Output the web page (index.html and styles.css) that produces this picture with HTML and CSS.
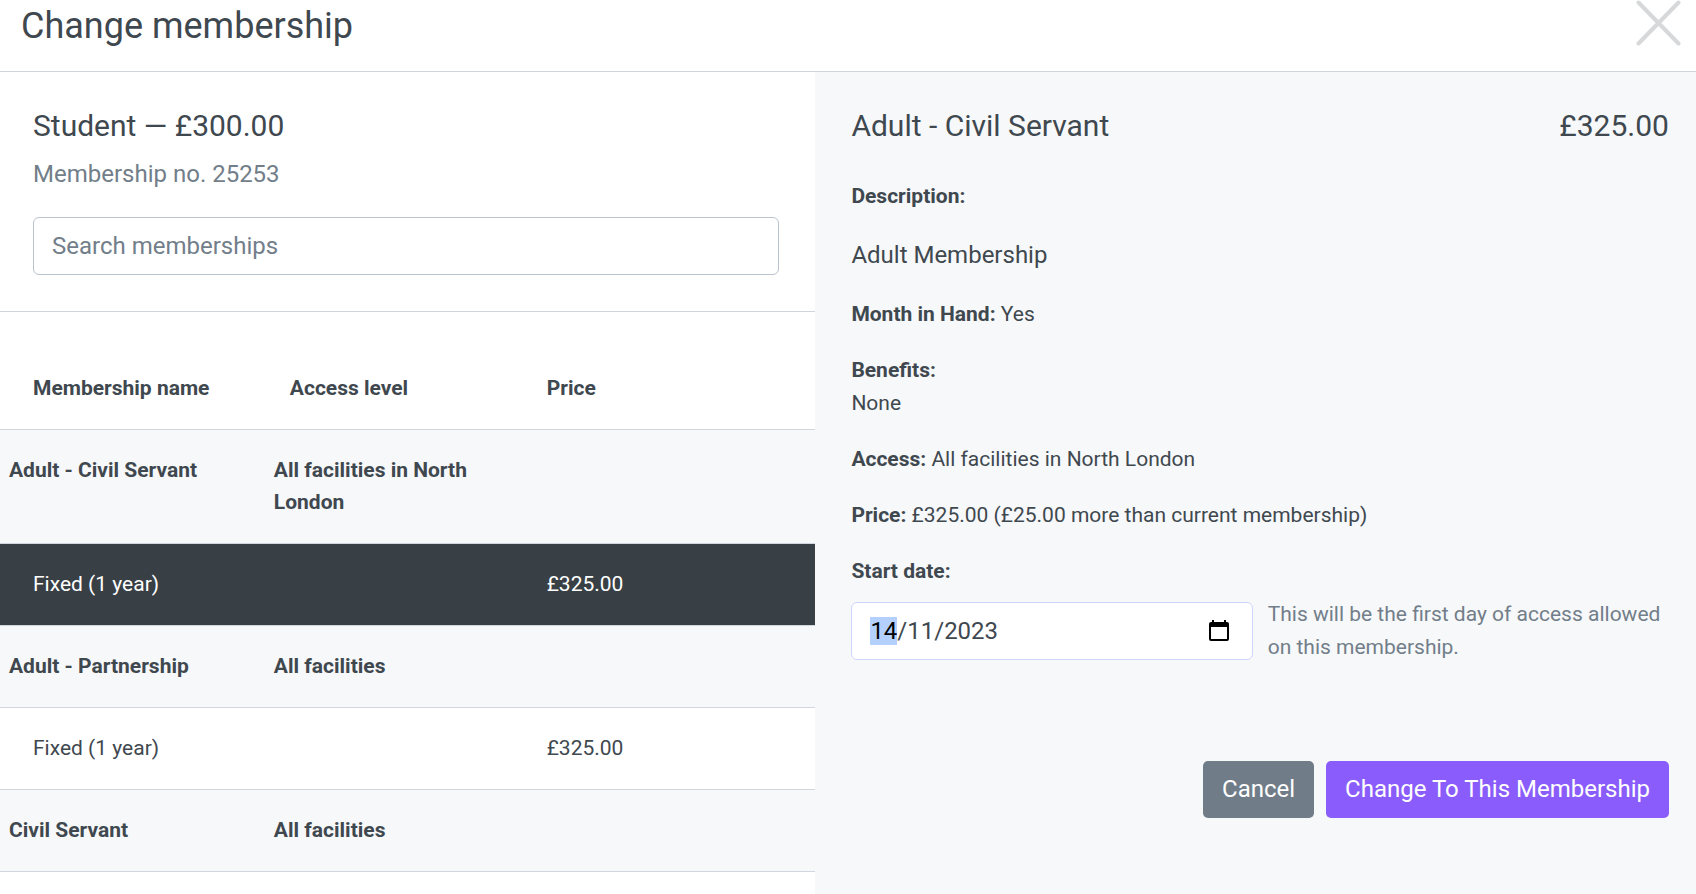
FILE: index.html
```html
<!doctype html>
<html lang="en">

<head>
<meta charset="utf-8">
<meta name="viewport" content="width=device-width, initial-scale=1">
<title>Change membership</title>
<link rel="stylesheet" href="styles.css">
</head>
<body>

<header class="header">
  <h1>Change membership</h1>
  <button type="button" class="close" aria-label="Close">
    <svg width="45" height="46" viewBox="0 0 45 46"><path d="M2.500 2.500 42.500 43.500M42.500 2.500 2.500 43.500"/></svg>
  </button>
</header>

<main class="columns">

  <!-- Current membership and the list to pick from -->
  <section class="list">
    <div class="current">
      <h2>Student — £300.00</h2>
      <p class="number">Membership no. 25253</p>
      <input type="text" class="field" placeholder="Search memberships" aria-label="Search memberships">
    </div>
    <table class="memberships">
      <thead>
        <tr>
          <th>Membership name</th>
          <th>Access level</th>
          <th>Price</th>
        </tr>
      </thead>
      <tbody>
        <tr class="group">
          <th>Adult - Civil Servant</th>
          <th>All facilities in North London</th>
          <th></th>
        </tr>
        <tr class="selected">
          <td>Fixed (1 year)</td>
          <td></td>
          <td>£325.00</td>
        </tr>
        <tr class="group">
          <th>Adult - Partnership</th>
          <th>All facilities</th>
          <th></th>
        </tr>
        <tr>
          <td>Fixed (1 year)</td>
          <td></td>
          <td>£325.00</td>
        </tr>
        <tr class="group">
          <th>Civil Servant</th>
          <th>All facilities</th>
          <th></th>
        </tr>
      </tbody>
    </table>
  </section>

  <!-- Details of the selected membership -->
  <section class="detail">
    <div class="detail-title">
      <h2>Adult - Civil Servant</h2>
      <h2>£325.00</h2>
    </div>
    <p><strong>Description:</strong></p>
    <p class="description">Adult Membership</p>
    <p><strong>Month in Hand:</strong> Yes</p>
    <p><strong>Benefits:</strong><br>None</p>
    <p><strong>Access:</strong> All facilities in North London</p>
    <p><strong>Price:</strong> £325.00 (£25.00 more than current membership)</p>
    <label for="start">Start date:</label>
    <div class="start">
      <div class="date">
        <input type="text" id="start" class="field" value="14/11/2023" autocomplete="off">
        <button type="button" class="picker" aria-label="Open calendar">
          <svg width="20" height="21" viewBox="0 0 20 21"><path fill-rule="evenodd" d="M3 0h2v2h10V0h2v2h1a2 2 0 0 1 2 2v15a2 2 0 0 1-2 2H2a2 2 0 0 1-2-2V4a2 2 0 0 1 2-2h1zM2 7v12h16V7z"/></svg>
        </button>
      </div>
      <p class="hint">This will be the first day of access allowed on this membership.</p>
    </div>
    <div class="buttons">
      <button type="button" class="btn">Cancel</button>
      <button type="button" class="btn primary">Change To This Membership</button>
    </div>
  </section>

</main>

<script>
// start with the day selected, ready to type over
var start = document.getElementById('start');
start.focus();
start.setSelectionRange(0, 2);
</script>

</body>

</html>
```
FILE: styles.css
```css
* {
  box-sizing: border-box;
}
body {
  margin: 0;
  min-height: 100vh;
  display: flex;
  flex-direction: column;
  font-family: Roboto, "Liberation Sans", sans-serif;
  font-size: 21px;
  line-height: 32px;
  color: #40484f;
  background-color: #fff;
}
h1, h2, p {
  margin: 0;
  font-weight: 400;
}
h1 {
  font-size: 36px;
  line-height: 43px;
}
h2 {
  font-size: 30px;
  line-height: 36px;
}
input, button {
  font-family: inherit;
  font-size: 24px;
  line-height: 36px;
}
button {
  cursor: pointer;
}

.header {
  display: flex;
  justify-content: space-between;
  align-items: flex-start;
  border-bottom: 1px solid #d0d5dd;
}
.header h1 {
  padding: 5px 21px 23px;
}
.close {
  margin-right: 15px;
  padding: 0;
  border: 0;
  background: none;
  line-height: 0;
}
.close path {
  fill: none;
  stroke: #d6d8da;
  stroke-width: 4;
  stroke-linecap: round;
}

.columns {
  flex: 1;
  display: grid;
  grid-template-columns: 25fr 27fr;
}

.current {
  padding: 36px 36px 36px 33px;
  border-bottom: 1px solid #d0d5dd;
}
.number {
  margin: 12px 0 25px;
  font-size: 24px;
  line-height: 36px;
  color: #727e89;
}
.field {
  display: block;
  width: 100%;
  height: 58px;
  padding: 0 18px;
  border: 1px solid #b9c3cd;
  border-radius: 6px;
  outline: 0;
  color: #40484f;
  background-color: #fff;
}
.field::placeholder {
  color: #727e89;
  opacity: 1;
}

.memberships {
  width: 100%;
  table-layout: fixed;
  border-collapse: separate;
  border-spacing: 0;
  text-align: left;
}
.memberships th,
.memberships td {
  padding: 24px 0 25px 33px;
  vertical-align: top;
  border-bottom: 1px solid #d0d7df;
}
.memberships th {
  font-weight: 700;
}
.memberships thead th {
  width: 31.5%;
  padding-top: 60px;
}
.memberships thead th:last-child {
  width: auto;
}
.memberships .group th {
  padding-left: 17px;
  background-color: #f7f8fa;
}
.memberships .group th:first-child {
  padding-left: 9px;
}
.memberships .selected td {
  color: #fff;
  background-color: #383f45;
}

.detail {
  padding: 36px 27px 36px 36px;
  line-height: 33px;
  background-color: #f7f8fa;
}
.detail-title {
  display: flex;
  justify-content: space-between;
  margin-bottom: 36px;
}
.detail p {
  margin-bottom: 23px;
}
.detail .description {
  margin: 24px 0 25px;
  font-size: 24px;
  line-height: 36px;
}
.detail label {
  display: block;
  margin-bottom: 10px;
  font-weight: 700;
}
.start {
  display: grid;
  grid-template-columns: 1fr 1fr;
  column-gap: 15px;
  align-items: center;
}
.detail .hint {
  margin: 0;
  color: #727e89;
}
.date {
  position: relative;
}
.date .field {
  border-color: #ccd6fb;
}
.date .field::selection {
  color: #000;
  background-color: #b3d0fe;
}
.picker {
  position: absolute;
  top: 18px;
  right: 24px;
  padding: 0;
  border: 0;
  background: none;
  line-height: 0;
}
.buttons {
  display: flex;
  justify-content: flex-end;
  gap: 12px;
  margin-top: 97px;
}
.btn {
  padding: 10px 19px 11px;
  border: 0;
  border-radius: 5px;
  color: #fff;
  background-color: #707c87;
}
.primary {
  background-color: #895cfb;
}
```
